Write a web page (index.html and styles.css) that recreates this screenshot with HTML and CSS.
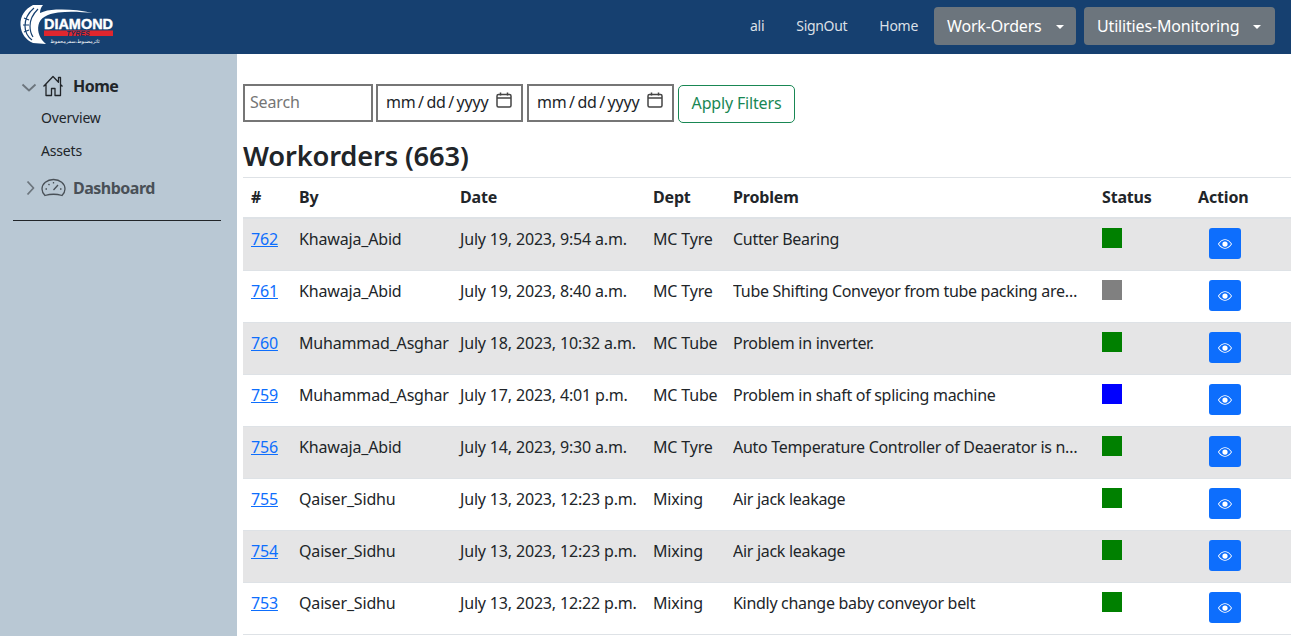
FILE: index.html
```html
<!DOCTYPE html>
<html lang="en">
<head>
  <meta charset="UTF-8" />
  <title>Workorders</title>
  <link rel="stylesheet" href="styles.css">
</head>
<body>
  <!-- TOP BAR -->
  <nav class="topbar">
    <a class="brand" href="#">
      <svg width="100" height="48" viewBox="16 3 100 48">
        <path d="M33 6C25 10 20 17 20.500 26C21 35 26 41 33 44L46 45C40 40 37 33 38.500 26C40 19 47 15 58 13.500C70 12 82 13 93 14C80 11 68 10 56 10.500C50 10.800 44 12 40 14C40 11 41 8 43 6Z" fill="#fff"/>
        <path class="tread" d="M34 9C28 14 25 20 25 27C25 33 28 38 32 41M38 10C33 15 30 20 30 27C30 32 31 35 33 38M24 19l5 2M23 26l6 0M24 33l5-2" />
        <text x="44" y="30" class="logo-name" textLength="69" lengthAdjust="spacingAndGlyphs">DIAMOND</text>
        <rect x="44" y="31.500" width="69" height="5.500" fill="#e0262e"/>
        <text x="78" y="36.600" class="logo-sub" text-anchor="middle">TYRES</text>
        <text x="75" y="43.500" class="logo-urdu" text-anchor="middle">ٹائرمضبوط،سفرمحفوظ</text>
      </svg>
    </a>
    <div class="nav-links">
      <a href="#">ali</a>
      <a href="#">SignOut</a>
      <a class="nav-last" href="#">Home</a>
      <button class="nav-drop nav-drop-orders" type="button">Work-Orders</button>
      <button class="nav-drop nav-drop-utils" type="button">Utilities-Monitoring</button>
    </div>
  </nav>

  <div class="page">
    <!-- SIDEBAR -->
    <aside class="sidebar">
      <div class="side-head">
        <svg class="chev-down" width="16" height="9" viewBox="0 0 16 9"><path d="M1.500 1.500L8 7.500l6.500-6" /></svg>
        <svg class="side-icon" width="22" height="22" viewBox="0 0 22 22"><path d="M1.500 11.500L11 1.500l5.500 5.800V2.500h2v7l2 2M4 9v11.500h5.500v-7h3.500v7H18.500V9" /></svg>
        <span class="side-title">Home</span>
      </div>
      <a class="side-link" href="#">Overview</a>
      <a class="side-link" href="#">Assets</a>
      <div class="side-head side-head-muted">
        <svg class="chev-right" width="9" height="16" viewBox="0 0 9 16"><path d="M1.500 1.500L7.500 8l-6 6.500" /></svg>
        <svg class="gauge" width="25" height="20" viewBox="0 0 25 20"><path d="M4 17.500C2 15.500 1 13.500 1 11 1 5.500 6 1.500 12.500 1.500S24 5.500 24 11c0 2.500-1 4.500-3 6.500-5-1.500-12-1.500-17 0z" /><path d="M12.500 12l4.500-5M4.500 11h1.500M19 11h1.500M7.500 6l1 1.200M12.500 4v1.500" /></svg>
        <span class="side-title">Dashboard</span>
      </div>
      <hr class="side-rule">
    </aside>

    <!-- WORKORDERS -->
    <main class="content">
      <form class="filters">
        <input class="filter-input filter-search" type="text" placeholder="Search" />
        <input class="filter-input filter-date" type="date" />
        <input class="filter-input filter-date" type="date" />
        <button class="apply-btn" type="submit">Apply Filters</button>
      </form>

      <h2 class="page-title">Workorders (663)</h2>

      <table class="orders">
        <colgroup>
          <col class="c-num"><col class="c-by"><col class="c-date"><col class="c-dept"><col class="c-prob"><col class="c-status"><col class="c-action">
        </colgroup>
        <thead>
          <tr><th>#</th><th>By</th><th>Date</th><th>Dept</th><th>Problem</th><th>Status</th><th>Action</th></tr>
        </thead>
        <tbody id="rows"></tbody>
      </table>
    </main>
  </div>

  <script>
    const orders = [
      ["762", "Khawaja_Abid", "July 19, 2023, 9:54 a.m.", "MC Tyre", "Cutter Bearing", "green"],
      ["761", "Khawaja_Abid", "July 19, 2023, 8:40 a.m.", "MC Tyre", "Tube Shifting Conveyor from tube packing area to dispatch", "gray"],
      ["760", "Muhammad_Asghar", "July 18, 2023, 10:32 a.m.", "MC Tube", "Problem in inverter.", "green"],
      ["759", "Muhammad_Asghar", "July 17, 2023, 4:01 p.m.", "MC Tube", "Problem in shaft of splicing machine", "blue"],
      ["756", "Khawaja_Abid", "July 14, 2023, 9:30 a.m.", "MC Tyre", "Auto Temperature Controller of Deaerator is not working", "green"],
      ["755", "Qaiser_Sidhu", "July 13, 2023, 12:23 p.m.", "Mixing", "Air jack leakage", "green"],
      ["754", "Qaiser_Sidhu", "July 13, 2023, 12:23 p.m.", "Mixing", "Air jack leakage", "green"],
      ["753", "Qaiser_Sidhu", "July 13, 2023, 12:22 p.m.", "Mixing", "Kindly change baby conveyor belt", "green"]
    ];

    const eye = '<svg width="14" height="14" viewBox="0 0 16 16" fill="#fff"><path d="M16 8s-3-5.500-8-5.500S0 8 0 8s3 5.500 8 5.500S16 8 16 8zM1.173 8a13.133 13.133 0 0 1 1.660-2.043C4.120 4.668 5.880 3.500 8 3.500c2.120 0 3.879 1.168 5.168 2.457A13.133 13.133 0 0 1 14.828 8c-.058.087-.122.183-.195.288-.335.480-.830 1.120-1.465 1.755C11.879 11.332 10.119 12.500 8 12.500c-2.120 0-3.879-1.168-5.168-2.457A13.134 13.134 0 0 1 1.172 8z"/><circle cx="8" cy="8" r="3"/></svg>';

    document.getElementById("rows").innerHTML = orders.map(o => `
      <tr>
        <td><a href="#">${o[0]}</a></td>
        <td>${o[1]}</td>
        <td>${o[2]}</td>
        <td>${o[3]}</td>
        <td class="problem"><div>${o[4]}</div></td>
        <td><span class="status status-${o[5]}"></span></td>
        <td class="action"><button class="view-btn" type="button">${eye}</button></td>
      </tr>`).join("");
  </script>
</body>
</html>
```

FILE: styles.css
```css
* {
  box-sizing: border-box;
}

body {
  margin: 0;
  font-family: "Noto Sans", sans-serif;
  font-size: 16px;
  letter-spacing: -0.17px;
  color: #212529;
  background: #fff;
}

a {
  color: #0d6efd;
}

input, button {
  letter-spacing: inherit;
}

.topbar {
  display: flex;
  justify-content: space-between;
  align-items: center;
  height: 54px;
  padding: 0 16px 2px;
  background: #164070;
}

.brand {
  display: flex;
}

.tread {
  fill: none;
  stroke: #164070;
  stroke-width: 1.200;
}

.logo-name {
  font-family: "Liberation Sans", sans-serif;
  font-weight: bold;
  font-size: 15px;
  letter-spacing: 0;
  fill: #fff;
  stroke: #fff;
  stroke-width: 0.400;
}

.logo-sub {
  font-family: "Liberation Sans", sans-serif;
  font-weight: bold;
  font-style: italic;
  font-size: 7px;
  letter-spacing: 0;
  fill: #14305a;
}

.logo-urdu {
  font-family: "DejaVu Sans", sans-serif;
  font-size: 5px;
  letter-spacing: 0;
  fill: #fff;
}

.nav-links {
  display: flex;
  align-items: center;
  gap: 8px;
}

.nav-links a {
  padding: 8px;
  margin: 0 8px 2px 0;
  color: rgba(255, 255, 255, 0.85);
  font-size: 14px;
  letter-spacing: -0.3px;
  text-decoration: none;
}

.nav-links .nav-last {
  margin-right: 0;
}

.nav-drop {
  height: 38px;
  padding: 0 0 0 13px;
  border: 0;
  border-radius: 4px;
  background: #6c757d;
  color: #fff;
  font: inherit;
  text-align: left;
}

.nav-drop-orders {
  width: 142px;
}

.nav-drop-utils {
  width: 191px;
}

.nav-drop::after {
  content: "";
  display: inline-block;
  margin-left: 14px;
  vertical-align: 3px;
  border-top: 4.800px solid #fff;
  border-left: 4.800px solid transparent;
  border-right: 4.800px solid transparent;
}

.page {
  display: flex;
  min-height: 582px;
}

.sidebar {
  flex: 0 0 237px;
  padding: 20px 16px 0 13px;
  background: #b9c8d4;
}

.side-head {
  display: flex;
  align-items: center;
  height: 24px;
  font-weight: 700;
}

.side-title {
  margin-left: 9px;
  letter-spacing: -0.5px;
}

.side-head-muted {
  margin-top: 12px;
  color: #495057;
}

.side-head-muted .side-title {
  margin-left: 7px;
}

.side-head svg path {
  fill: none;
  stroke-width: 1.300;
  stroke-linejoin: round;
}

.side-head .chev-down path,
.side-head .chev-right path {
  stroke: #6c757d;
  stroke-width: 1.800;
}

.chev-down {
  margin: 3px 0 0 8px;
}

.side-icon {
  margin-left: 5px;
}

.side-icon path {
  stroke: #212529;
}

.chev-right {
  margin-left: 13px;
}

.gauge {
  margin-left: 6px;
}

.gauge path {
  stroke: #495057;
}

.side-link {
  display: block;
  height: 33px;
  padding: 10px 0 0 28px;
  color: #212529;
  font-size: 14px;
  text-decoration: none;
}

.side-rule {
  margin: 20px 0 0;
  border: 0;
  border-top: 1px solid #212529;
}

.content {
  flex: 1;
  min-width: 0;
  padding: 30px 0 0 6px;
}

.filters {
  display: flex;
  align-items: flex-start;
  gap: 4px;
}

.filter-input {
  height: 38px;
  padding: 0 5px 2px;
  border: 2px solid #767676;
  font-family: inherit;
  font-size: 16px;
  color: #212529;
  background: #fff;
}

.filter-search {
  width: 130px;
  margin-right: -1px;
}

.filter-date {
  width: 147px;
  padding-left: 7px;
}

.filter-date::-webkit-datetime-edit-text {
  padding: 0 1.500px;
}

.filter-date::-webkit-calendar-picker-indicator {
  width: 16px;
  height: 16px;
  padding: 0;
  margin: 0 4px 5px 0;
  opacity: 1;
  background: url("data:image/svg+xml,%3Csvg xmlns='http://www.w3.org/2000/svg' viewBox='0 0 16 16'%3E%3Crect x='1' y='2.500' width='14' height='12.500' rx='1.500' fill='none' stroke='%23444' stroke-width='1.500'/%3E%3Cpath d='M1 6h14M4.500 .5v3M11.500 .5v3' fill='none' stroke='%23444' stroke-width='1.500'/%3E%3C/svg%3E") no-repeat center;
}

.apply-btn {
  width: 117px;
  height: 38px;
  margin-top: 1px;
  padding: 0 0 2px;
  border: 1px solid #198754;
  border-radius: 5px;
  background: #fff;
  color: #198754;
  font: inherit;
}

.page-title {
  margin: 17px 0 5px;
  font-size: 27.300px;
  line-height: 32px;
  font-weight: 600;
}

.orders {
  width: 100%;
  table-layout: fixed;
  border-collapse: separate;
  border-spacing: 0;
}

.c-num { width: 48px; }
.c-by { width: 161px; }
.c-date { width: 193px; }
.c-dept { width: 80px; }
.c-prob { width: 369px; }
.c-status { width: 96px; }

.orders th {
  height: 42px;
  padding: 0 8px 2px;
  text-align: left;
  font-weight: 700;
  border-top: 1px solid #dee2e6;
  border-bottom: 2px solid #dee2e6;
}

.orders td {
  height: 52px;
  padding: 9px 8px 7px;
  vertical-align: top;
  white-space: nowrap;
  border-bottom: 1px solid #dee2e6;
}

.orders .problem {
  padding-right: 10px;
}

.orders tbody tr:nth-child(odd) {
  background: #e5e5e6;
}

.problem div {
  overflow: hidden;
  letter-spacing: -0.3px;
  white-space: nowrap;
  text-overflow: ellipsis;
}

.status {
  display: block;
  width: 20px;
  height: 20px;
}

.status-green { background: green; }
.status-gray { background: gray; }
.status-blue { background: blue; }

.action {
  text-align: center;
}

.view-btn {
  display: inline-flex;
  align-items: center;
  justify-content: center;
  width: 32px;
  height: 31px;
  margin: 0 31px 0 0;
  padding: 0;
  border: 0;
  border-radius: 3px;
  background: #0d6efd;
}
```
